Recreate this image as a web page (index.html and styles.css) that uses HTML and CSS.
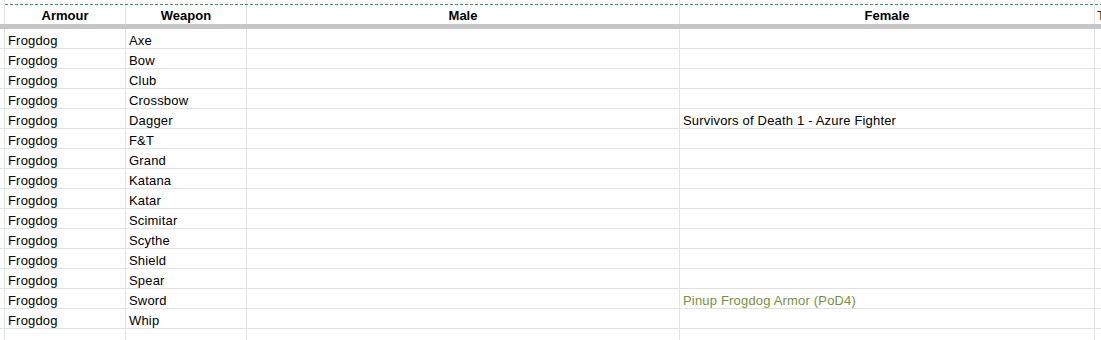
FILE: index.html
```html
<!DOCTYPE html>
<html>
<head>
<meta charset="utf-8">
<title>Frogdog</title>
<link rel="stylesheet" href="styles.css">
</head>
<body>
<div class="sheet">
  <div class="row row-top">
    <div class="cell g"></div><div class="cell c1"></div><div class="cell c2"></div><div class="cell c3"></div><div class="cell c4"></div><div class="cell c5"></div>
  </div>
  <div class="dash"></div>
  <div class="row row-head">
    <div class="cell g"></div>
    <div class="cell c1">Armour</div>
    <div class="cell c2">Weapon</div>
    <div class="cell c3">Male</div>
    <div class="cell c4">Female</div>
    <div class="cell c5 t">T</div>
  </div>
  <div class="freeze"></div>
  <div class="row"><div class="cell g"></div><div class="cell c1">Frogdog</div><div class="cell c2">Axe</div><div class="cell c3"></div><div class="cell c4"></div><div class="cell c5"></div></div>
  <div class="row"><div class="cell g"></div><div class="cell c1">Frogdog</div><div class="cell c2">Bow</div><div class="cell c3"></div><div class="cell c4"></div><div class="cell c5"></div></div>
  <div class="row"><div class="cell g"></div><div class="cell c1">Frogdog</div><div class="cell c2">Club</div><div class="cell c3"></div><div class="cell c4"></div><div class="cell c5"></div></div>
  <div class="row"><div class="cell g"></div><div class="cell c1">Frogdog</div><div class="cell c2">Crossbow</div><div class="cell c3"></div><div class="cell c4"></div><div class="cell c5"></div></div>
  <div class="row"><div class="cell g"></div><div class="cell c1">Frogdog</div><div class="cell c2">Dagger</div><div class="cell c3"></div><div class="cell c4">Survivors of Death 1 - Azure Fighter</div><div class="cell c5"></div></div>
  <div class="row"><div class="cell g"></div><div class="cell c1">Frogdog</div><div class="cell c2">F&amp;T</div><div class="cell c3"></div><div class="cell c4"></div><div class="cell c5"></div></div>
  <div class="row"><div class="cell g"></div><div class="cell c1">Frogdog</div><div class="cell c2">Grand</div><div class="cell c3"></div><div class="cell c4"></div><div class="cell c5"></div></div>
  <div class="row"><div class="cell g"></div><div class="cell c1">Frogdog</div><div class="cell c2">Katana</div><div class="cell c3"></div><div class="cell c4"></div><div class="cell c5"></div></div>
  <div class="row"><div class="cell g"></div><div class="cell c1">Frogdog</div><div class="cell c2">Katar</div><div class="cell c3"></div><div class="cell c4"></div><div class="cell c5"></div></div>
  <div class="row"><div class="cell g"></div><div class="cell c1">Frogdog</div><div class="cell c2">Scimitar</div><div class="cell c3"></div><div class="cell c4"></div><div class="cell c5"></div></div>
  <div class="row"><div class="cell g"></div><div class="cell c1">Frogdog</div><div class="cell c2">Scythe</div><div class="cell c3"></div><div class="cell c4"></div><div class="cell c5"></div></div>
  <div class="row"><div class="cell g"></div><div class="cell c1">Frogdog</div><div class="cell c2">Shield</div><div class="cell c3"></div><div class="cell c4"></div><div class="cell c5"></div></div>
  <div class="row"><div class="cell g"></div><div class="cell c1">Frogdog</div><div class="cell c2">Spear</div><div class="cell c3"></div><div class="cell c4"></div><div class="cell c5"></div></div>
  <div class="row"><div class="cell g"></div><div class="cell c1">Frogdog</div><div class="cell c2">Sword</div><div class="cell c3"></div><div class="cell c4 green">Pinup Frogdog Armor (PoD4)</div><div class="cell c5"></div></div>
  <div class="row"><div class="cell g"></div><div class="cell c1">Frogdog</div><div class="cell c2">Whip</div><div class="cell c3"></div><div class="cell c4"></div><div class="cell c5"></div></div>
  <div class="row"><div class="cell g"></div><div class="cell c1"></div><div class="cell c2"></div><div class="cell c3"></div><div class="cell c4"></div><div class="cell c5"></div></div>
</div>
</body>
</html>
```
FILE: styles.css
```css
html, body {
  margin: 0;
  padding: 0;
  background: #ffffff;
  overflow: hidden;
}
body {
  font-family: "Liberation Sans", Arial, sans-serif;
  font-size: 13px;
  color: #000000;
}
.sheet {
  width: 1101px;
  height: 340px;
  overflow: hidden;
}
.row {
  display: flex;
  height: 20px;
}
.cell {
  box-sizing: border-box;
  flex: none;
  height: 100%;
  border-right: 1px solid #e2e3e3;
  border-bottom: 1px solid #e2e3e3;
  padding: 4px 3px 0;
  line-height: 15px;
  letter-spacing: 0.18px;
  white-space: nowrap;
  overflow: hidden;
}
.g { width: 5px; padding: 0; }
.c1 { width: 121px; }
.c2 { width: 121px; }
.c3 { width: 433px; }
.c4 { width: 415px; }
.c5 { flex: 1 1 auto; border-right: none; }
.row-top { height: 4px; }
.row-top .cell { border-bottom: none; }
.dash {
  height: 1px;
  margin-left: 5px;
  background: repeating-linear-gradient(to right, #3f9160 0 3px, transparent 3px 5px);
}
.row-head { height: 19px; }
.row-head .cell {
  border-bottom: none;
  padding-top: 3px;
  font-weight: bold;
  letter-spacing: 0;
  text-align: center;
}
.row-head .t {
  text-align: left;
  padding-left: 2px;
  font-weight: normal;
  color: #5b0f00;
}
.freeze {
  height: 5px;
  background: #c6c6c6;
}
.green { color: #76923c; }
```
